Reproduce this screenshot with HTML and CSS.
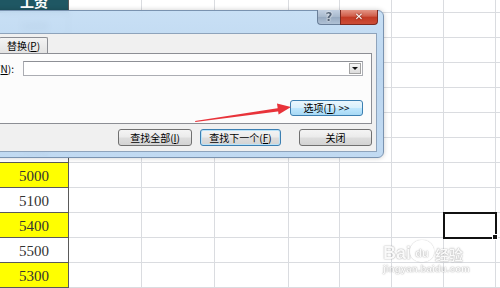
FILE: index.html
```html
<!DOCTYPE html>
<html lang="zh-CN">
<head>
<meta charset="UTF-8">
<meta name="viewport" content="width=device-width, initial-scale=1.0">
<title>查找和替换</title>
<link rel="stylesheet" href="styles.css">
</head>
<body>
<div id="sheet"></div>

<div class="dialog">
  <div class="title-buttons">
    <span class="tb-btn help">?</span>
    <span class="tb-btn close">✕</span>
  </div>
  <div class="client">
    <div class="tabs">
      <span class="tab active"></span>
      <span class="tab">替换(<u>P</u>)</span>
    </div>
    <div class="panel">
      <div class="find-row">
        <label class="find-label">查找内容(<u>N</u>):</label>
        <div class="combo"><span class="drop"></span></div>
      </div>
      <div class="options-row">
        <button class="btn options">选项(<u>T</u>) &gt;&gt;</button>
      </div>
    </div>
    <div class="actions">
      <button class="btn find-all">查找全部(<u>I</u>)</button>
      <button class="btn find-next">查找下一个(<u>F</u>)</button>
      <button class="btn close-btn">关闭</button>
    </div>
  </div>
</div>

<svg class="arrow" width="500" height="288" viewBox="0 0 500 288">
  <polygon points="195,121 279,108 279.6,111.2 195.4,122" fill="#e8333a"/>
  <polygon points="291,107 277,103.5 278.6,114.5" fill="#e8333a"/>
</svg>

<div class="watermark">
  <div class="wm-logo">
    <span class="wm-bai">Bai</span>
    <span class="wm-paw">du</span>
    <span class="wm-cn">经验</span>
  </div>
  <div class="wm-url">jingyan.baidu.com</div>
</div>

<script>
  // column A values, row 0 is the header
  const colA = ['工资', '5000', '4800', '5200', '4900', '5100', '5300', '5000', '5100', '5400', '5500', '5300'];
  const sheet = document.getElementById('sheet');

  colA.forEach(function(val, r) {
    for (let c = 0; c < 9; c++) {
      const cell = document.createElement('div');
      cell.className = 'cell';
      if (c === 0) {
        cell.classList.add('col-a');
        cell.textContent = val;
        if (r === 0) cell.classList.add('head');
        else if (r >= 7 && r % 2 === 1) cell.classList.add('yellow');
      }
      if (r === 9 && c === 7) cell.classList.add('selected');
      sheet.appendChild(cell);
    }
  });
</script>
</body>
</html>
```

FILE: styles.css
```css
html, body {
  margin: 0;
  padding: 0;
}

body {
  width: 500px;
  height: 288px;
  overflow: hidden;
  position: relative;
  background-color: white;
  font-family: "Noto Sans CJK SC", sans-serif;
}

/* spreadsheet */
#sheet {
  display: grid;
  grid-template-columns: 69px 73px 73px 74px 51px 52px 52px 52px 52px;
  grid-auto-rows: 25px;
  margin-top: -12px;
}

.cell {
  box-sizing: border-box;
  border-right: 1px solid #dadce0;
  border-bottom: 1px solid #dadce0;
  display: flex;
  align-items: center;
  justify-content: center;
  padding-top: 2px;
  font-family: "Liberation Serif", serif;
  font-size: 15px;
  color: #333;
}

.cell.col-a {
  border-color: #5a5a5a;
}

.cell.head {
  background-color: #1f5763;
  color: white;
  font-family: "Noto Sans CJK SC", sans-serif;
  font-weight: bold;
  font-size: 14px;
}

.cell.yellow {
  background-color: #ffff00;
}

.cell.selected {
  position: relative;
  outline: 2px solid #111;
  outline-offset: -1px;
}

.cell.selected::after {
  content: "";
  position: absolute;
  right: -3px;
  bottom: -3px;
  width: 4px;
  height: 4px;
  background-color: #111;
  border: 1px solid white;
}

/* find dialog */
.dialog {
  position: absolute;
  top: 10px;
  left: -70px;
  width: 454px;
  height: 148px;
  box-sizing: border-box;
  padding: 22px 6px 5px 8px;
  border: 1px solid #7a93b0;
  border-radius: 6px;
  background: linear-gradient(180deg, rgba(196, 221, 244, 0.93) 0%, rgba(184, 212, 239, 0.93) 40%, rgba(190, 216, 241, 0.95) 100%);
  backdrop-filter: blur(3px);
  box-shadow: 0 0 5px rgba(0, 0, 0, 0.2);
}

.title-buttons {
  position: absolute;
  top: -1px;
  right: 5px;
  display: flex;
}

.tb-btn {
  box-sizing: border-box;
  height: 15px;
  display: flex;
  align-items: center;
  justify-content: center;
  border: 1px solid #6a7f99;
  border-top: none;
  font-size: 11px;
  line-height: 1;
}

.tb-btn.help {
  width: 23px;
  border-radius: 0 0 0 4px;
  border-right: none;
  background: linear-gradient(180deg, #c3d1e2 0%, #a7b8cc 50%, #96a9c0 51%, #b0c1d5 100%);
  color: #56667a;
  font-family: "DejaVu Sans", sans-serif;
  font-weight: bold;
  font-size: 12px;
  text-shadow: 0 0 2px white, 0 0 1px white;
}

.tb-btn.close {
  width: 38px;
  border-radius: 0 0 4px 0;
  border-color: #7d2a20;
  background: linear-gradient(180deg, #e49585 0%, #d05d49 45%, #c23a24 50%, #cc4d37 100%);
  color: white;
  font-family: "DejaVu Sans", sans-serif;
  font-weight: bold;
  font-size: 10px;
  text-shadow: 0 0 2px #5a1a10;
}

.client {
  box-sizing: border-box;
  height: 100%;
  display: flex;
  flex-direction: column;
  background-color: #f0f0f0;
  border: 1px solid #8ea3bb;
  padding: 3px 4px 5px 4px;
  font-size: 10px;
  color: black;
}

.tabs {
  display: flex;
  align-items: flex-end;
  height: 16px;
  margin-left: 2px;
}

.tab {
  box-sizing: border-box;
  height: 16px;
  display: flex;
  align-items: center;
  justify-content: center;
  border: 1px solid #8c8e94;
  border-bottom: none;
  border-radius: 2px 2px 0 0;
  background: linear-gradient(180deg, #f3f3f3, #e3e3e3);
  width: 49px;
  margin-left: -1px;
}

.tab.active {
  width: 54px;
  height: 18px;
  margin-left: 0;
  background-color: #fcfcfc;
  background-image: none;
  margin-bottom: -1px;
  position: relative;
}

.panel {
  box-sizing: border-box;
  height: 71px;
  display: flex;
  flex-direction: column;
  justify-content: space-between;
  padding: 7px 8px 7px 8px;
  border: 1px solid #8c8e94;
  background-color: #fcfcfc;
}

.find-row {
  display: flex;
  align-items: center;
}

.find-label {
  width: 70px;
  box-sizing: border-box;
  padding-right: 9px;
  text-align: right;
  white-space: nowrap;
  overflow: hidden;
}

.combo {
  flex: 1;
  box-sizing: border-box;
  height: 15px;
  display: flex;
  align-items: center;
  justify-content: flex-end;
  padding-right: 1px;
  border: 1px solid #abadb3;
  border-top-color: #8e9096;
  background-color: white;
}

.drop {
  box-sizing: border-box;
  width: 12px;
  height: 11px;
  display: flex;
  align-items: center;
  justify-content: center;
  border: 1px solid #a3a3a3;
  background: linear-gradient(180deg, #f6f6f6, #dcdcdc);
}

.drop::before {
  content: "";
  border-left: 3px solid transparent;
  border-right: 3px solid transparent;
  border-top: 3px solid #111;
}

.options-row {
  display: flex;
  justify-content: flex-end;
}

.btn {
  box-sizing: border-box;
  height: 17px;
  padding: 0;
  border: 1px solid #707070;
  border-radius: 3px;
  background: linear-gradient(180deg, #f4f4f4 0%, #ebebeb 48%, #dddddd 52%, #d3d3d3 100%);
  font-family: "Noto Sans CJK SC", sans-serif;
  font-size: 10px;
  color: black;
  line-height: 1;
}

.btn.options {
  width: 73px;
  height: 16px;
  border-color: #3c7fb1;
  background: linear-gradient(180deg, #eaf6fd 0%, #d9f0fc 48%, #bee6fd 52%, #a7d9f5 100%);
}

.actions {
  display: flex;
  justify-content: flex-end;
  margin-top: 5px;
}

.find-all {
  width: 74px;
}

.find-next {
  width: 81px;
  margin-left: 8px;
  border-color: #3c7fb1;
  box-shadow: inset 0 0 0 1px #b9e2f8;
}

.close-btn {
  width: 73px;
  margin-left: 18px;
}

/* red pointer arrow */
.arrow {
  position: absolute;
  left: 0;
  top: 0;
  pointer-events: none;
}

/* watermark */
.watermark {
  position: absolute;
  left: 383px;
  top: 233px;
  width: 92px;
  color: rgba(255, 255, 255, 0.95);
  text-shadow: 0 0 1px rgba(90, 90, 90, 0.55), 0 0 2px rgba(90, 90, 90, 0.3);
}

.wm-logo {
  display: flex;
  align-items: flex-end;
  height: 29px;
}

.wm-bai {
  font-family: "Liberation Sans", sans-serif;
  font-size: 18px;
  font-weight: bold;
  line-height: 1;
}

.wm-paw {
  width: 24px;
  height: 22px;
  margin-left: -1px;
  display: flex;
  align-items: flex-end;
  justify-content: center;
  border-radius: 50% 50% 45% 45%;
  border: 2px solid rgba(255, 255, 255, 0.9);
  box-sizing: border-box;
  box-shadow: 0 0 1px rgba(90, 90, 90, 0.6);
  font-family: "Liberation Sans", sans-serif;
  font-size: 11px;
  font-weight: bold;
  line-height: 1.2;
}

.wm-cn {
  margin-left: 1px;
  font-size: 14px;
  font-weight: bold;
  line-height: 1.1;
}

.wm-url {
  margin-top: 1px;
  font-family: "Liberation Sans", sans-serif;
  font-size: 9.5px;
  font-weight: bold;
  letter-spacing: 0.2px;
}
```
